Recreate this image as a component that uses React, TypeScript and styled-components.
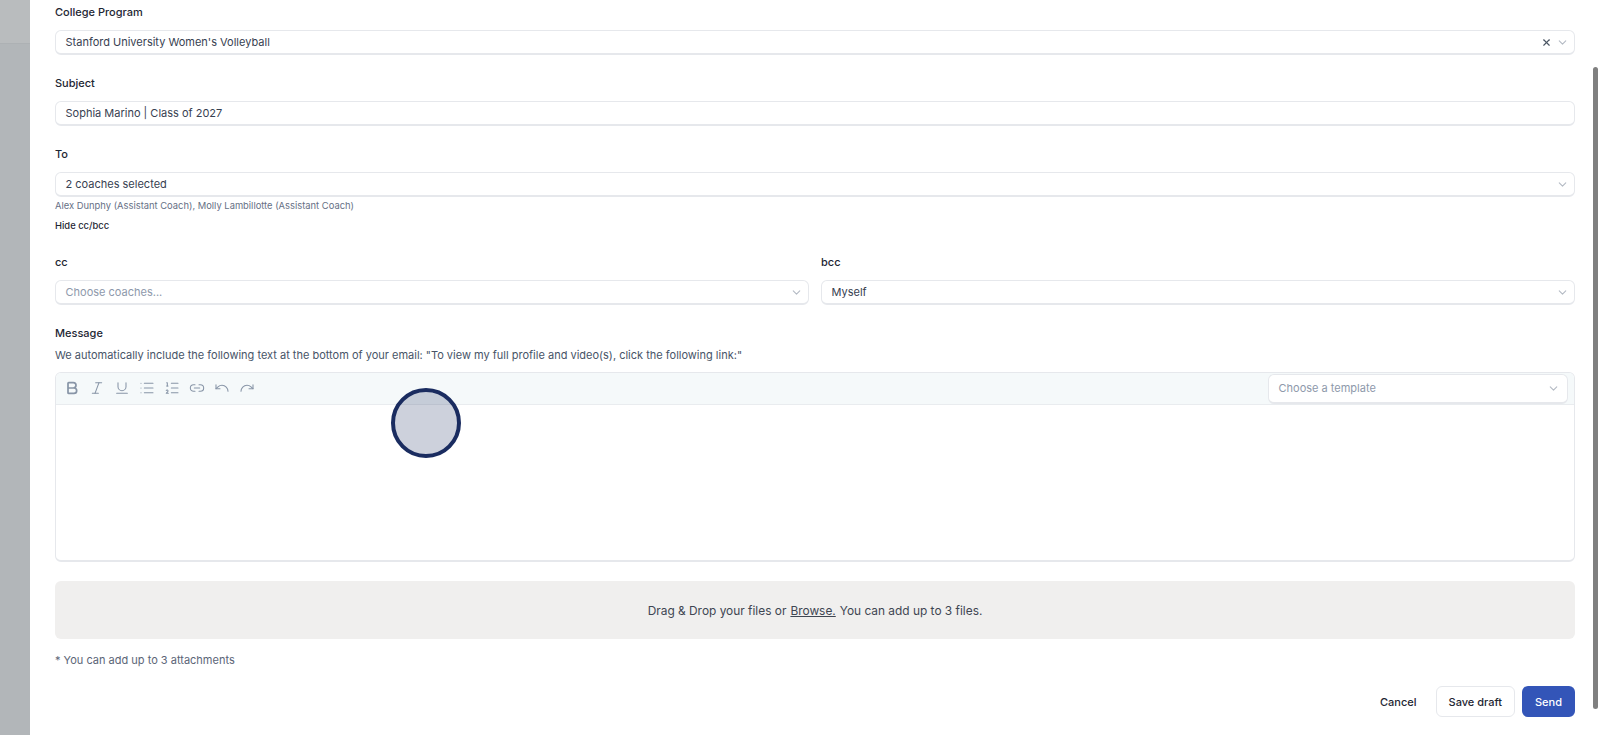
import styled, { createGlobalStyle } from "styled-components";
import { Bold, Italic, Underline, List, ListOrdered, Link2, Undo, Redo, ChevronDown, X } from "lucide-react";

const GlobalStyle = createGlobalStyle`
  html, body {
    margin: 0;
    height: 100%;
    overflow: hidden;
    background: #fff;
  }
  * {
    box-sizing: border-box;
  }
`;

const Page = styled.div`
  position: relative;
  display: flex;
  width: 1600px;
  height: 735px;
  overflow: hidden;
  font-family: Inter, "Liberation Sans", sans-serif;
  color: #1f2937;
`;

const Backdrop = styled.div`
  flex: 0 0 30px;
  background: #b2b6b9;
`;

const BackdropHeader = styled.div`
  height: 44px;
  background: #b9bcbe;
  border-bottom: 1px solid #adb1b4;
`;

const Panel = styled.div`
  flex: 1;
  background: #fff;
  padding: 4px 25px 0 25px;
`;

const Field = styled.div<{ $gap?: number }>`
  margin-bottom: ${(p) => p.$gap ?? 20}px;
  min-width: 0;
`;

const Label = styled.div`
  height: 17px;
  margin-bottom: 9px;
  font-size: 11px;
  line-height: 17px;
  font-weight: 500;
  color: #1e2633;
`;

const Control = styled.div`
  display: flex;
  align-items: center;
  height: 25px;
  padding: 0 5px 0 9.5px;
  background: #fff;
  border: 1px solid #e6e8ec;
  border-bottom-width: 2px;
  border-radius: 6px;
  font-size: 11px;
`;

const Value = styled.span<{ $placeholder?: boolean }>`
  flex: 1;
  color: ${(p) => (p.$placeholder ? "#8e99ab" : "#374151")};
`;

const ClearIcon = styled(X)`
  width: 11px;
  height: 11px;
  margin-right: 4px;
  color: #4b5563;
  stroke-width: 2.5;
`;

const Chevron = styled(ChevronDown)`
  width: 13px;
  height: 13px;
  color: #b4bac4;
`;

const Helper = styled.div`
  margin-top: 1px;
  font-size: 9.4px;
  line-height: 16px;
  color: #667085;
`;

const HideLink = styled.div`
  margin-top: 4px;
  font-size: 9.4px;
  line-height: 16px;
  font-weight: 500;
  color: #1e2633;
`;

const TwoColumns = styled.div`
  display: grid;
  grid-template-columns: 1fr 1fr;
  gap: 12px;
  margin-top: 20px;
`;

const Note = styled.div`
  margin-top: -5px;
  margin-bottom: 8px;
  font-size: 11px;
  line-height: 18px;
  color: #475467;
`;

const Editor = styled.div`
  height: 190px;
  border: 1px solid #e6e8ec;
  border-bottom-width: 2px;
  border-radius: 6px;
  overflow: hidden;
`;

const Toolbar = styled.div`
  display: flex;
  align-items: center;
  height: 32px;
  padding: 0 6px 0 8px;
  background: #f5f9fa;
  border-bottom: 1px solid #e9ecef;
`;

const ToolGroup = styled.div`
  display: flex;
  align-items: center;
  gap: 9px;
  flex: 1;
  padding-bottom: 2px;
  color: #8895a7;

  svg {
    width: 16px;
    height: 16px;
    stroke-width: 1.6;
  }

  svg:first-child {
    stroke-width: 2.6;
  }
`;

const TemplateSelect = styled(Control)`
  width: 300px;
  height: 30px;
  padding-right: 7px;
`;

const Dropzone = styled.div`
  display: flex;
  align-items: center;
  justify-content: center;
  height: 58px;
  margin-top: 19px;
  background: #f0efee;
  border-radius: 6px;
  font-size: 11.9px;
  color: #3f4652;
`;

const Browse = styled.span`
  margin: 0 4px;
  text-decoration: underline;
`;

const Footnote = styled.div`
  margin-top: 12px;
  font-size: 11px;
  line-height: 18px;
  color: #5b6577;
`;

const Actions = styled.div`
  display: flex;
  justify-content: flex-end;
  align-items: center;
  gap: 7px;
  margin-top: 17px;
`;

const Button = styled.button<{ $variant?: "ghost" | "outline" | "primary" }>`
  height: 31px;
  padding: 0 ${(p) => (p.$variant === "primary" ? 13 : 12)}px;
  font-family: inherit;
  font-size: 11px;
  font-weight: 500;
  border-radius: 6px;
  border: ${(p) => (p.$variant === "outline" ? "1px solid #e6e8ec" : "none")};
  background: ${(p) => (p.$variant === "primary" ? "#3355b8" : "#fff")};
  color: ${(p) => (p.$variant === "primary" ? "#fff" : "#1e2633")};
`;

const ScrollThumb = styled.div`
  position: absolute;
  top: 67px;
  right: 2px;
  width: 5px;
  height: 642px;
  background: #808080;
  border-radius: 3px;
`;

const ClickMarker = styled.div`
  position: absolute;
  left: 391px;
  top: 388px;
  width: 70px;
  height: 70px;
  border: 4px solid #1a2c60;
  border-radius: 50%;
  background: rgba(26, 44, 96, 0.22);
`;

export default function App() {
  return (
    <Page>
      <GlobalStyle />
      <Backdrop>
        <BackdropHeader />
      </Backdrop>
      <Panel>
        <Field>
          <Label>College Program</Label>
          <Control>
            <Value>Stanford University Women's Volleyball</Value>
            <ClearIcon />
            <Chevron />
          </Control>
        </Field>
        <Field>
          <Label>Subject</Label>
          <Control>
            <Value>Sophia Marino | Class of 2027</Value>
          </Control>
        </Field>
        <Field $gap={0}>
          <Label>To</Label>
          <Control>
            <Value>2 coaches selected</Value>
            <Chevron />
          </Control>
          <Helper>Alex Dunphy (Assistant Coach), Molly Lambillotte (Assistant Coach)</Helper>
          <HideLink>Hide cc/bcc</HideLink>
        </Field>
        <TwoColumns>
          <Field>
            <Label>cc</Label>
            <Control>
              <Value $placeholder>Choose coaches...</Value>
              <Chevron />
            </Control>
          </Field>
          <Field>
            <Label>bcc</Label>
            <Control>
              <Value>Myself</Value>
              <Chevron />
            </Control>
          </Field>
        </TwoColumns>
        <Field $gap={0}>
          <Label>Message</Label>
          <Note>
            We automatically include the following text at the bottom of your email: "To view my full profile and
            video(s), click the following link:"
          </Note>
          <Editor>
            <Toolbar>
              <ToolGroup>
                <Bold />
                <Italic />
                <Underline />
                <List />
                <ListOrdered />
                <Link2 />
                <Undo />
                <Redo />
              </ToolGroup>
              <TemplateSelect>
                <Value $placeholder>Choose a template</Value>
                <Chevron />
              </TemplateSelect>
            </Toolbar>
          </Editor>
        </Field>
        <Dropzone>
          Drag &amp; Drop your files or <Browse>Browse.</Browse> You can add up to 3 files.
        </Dropzone>
        <Footnote>* You can add up to 3 attachments</Footnote>
        <Actions>
          <Button $variant="ghost">Cancel</Button>
          <Button $variant="outline">Save draft</Button>
          <Button $variant="primary">Send</Button>
        </Actions>
      </Panel>
      <ScrollThumb />
      <ClickMarker />
    </Page>
  );
}
